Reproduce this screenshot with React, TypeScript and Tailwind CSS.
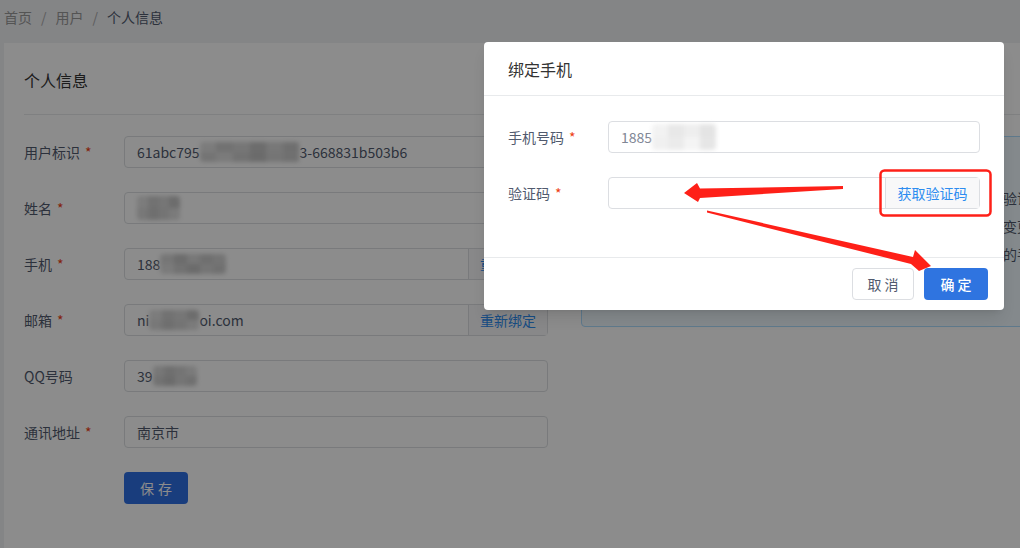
import React from "react";

const FONT = "font-['Microsoft_YaHei','Noto_Sans_CJK_SC','Noto_Sans',sans-serif]";

// blurred mosaic patch that hides private digits
const Mosaic = ({ tones, w, h = 20 }: { tones: string[]; w: number; h?: number }) => (
  <span
    className="inline-flex flex-wrap align-middle blur-[2px] overflow-hidden rounded"
    style={{ width: w, height: h }}
  >
    {tones.map((c, i) => (
      <span key={i} style={{ background: c, width: w / (tones.length / 2), height: h / 2 }} />
    ))}
  </span>
);

const dark = ["#e2e2e2", "#cfcfcf", "#d8d8d8", "#c6c6c6", "#dadada", "#cbcbcb", "#d4d4d4", "#e0e0e0", "#d0d0d0", "#c4c4c4", "#d6d6d6", "#cdcdcd"];
const light = ["#f2f2f2", "#e8e8e8", "#eeeeee", "#e4e4e4", "#f0f0f0", "#ebebeb", "#f4f4f4", "#e6e6e6"];

const Star = () => <span className="ml-[5px] text-[#ed4014]">*</span>;

const Row = ({
  label,
  required,
  children,
  addon,
}: {
  label: string;
  required?: boolean;
  children?: React.ReactNode;
  addon?: string;
}) => (
  <div className="flex items-center h-8 mb-6">
    <div className="w-[100px] text-sm text-[#515a6e]">
      {label}
      {required && <Star />}
    </div>
    <div className="flex w-[424px] h-8 border border-[#dcdee2] rounded">
      <div className="flex-1 flex items-center px-3 text-sm text-[#515a6e] whitespace-nowrap overflow-hidden">
        {children}
      </div>
      {addon && (
        <div className="w-[79px] flex items-center justify-center bg-[#f8f8f9] border-l border-[#dcdee2] text-sm text-[#2d8cf0]">
          {addon}
        </div>
      )}
    </div>
  </div>
);

export default function App() {
  return (
    <div className={`relative w-[1020px] h-[548px] overflow-hidden bg-[#f0f2f5] ${FONT}`}>
      {/* breadcrumb */}
      <div className="h-[43px] pl-1 pt-[7px] flex items-start text-sm leading-5 text-[#999]">
        <span>首页</span>
        <span className="mx-[9px] text-[#aaa]">/</span>
        <span>用户</span>
        <span className="mx-[9px] text-[#aaa]">/</span>
        <span className="text-[#515a6e]">个人信息</span>
      </div>

      {/* card */}
      <div className="ml-1 h-[505px] bg-white pl-5">
        <div className="h-[72px] pt-[2px] flex items-center text-base text-[#333] border-b border-[#e8eaec]">
          个人信息
        </div>
        <div className="flex pt-[21px]">
          <div className="w-[524px] shrink-0">
            <Row label="用户标识" required>
              61abc795
              <Mosaic tones={dark} w={100} />
              3-668831b503b6
            </Row>
            <Row label="姓名" required>
              <Mosaic tones={dark.slice(0, 8)} w={43} h={24} />
            </Row>
            <Row label="手机" required addon="重新绑定">
              188
              <Mosaic tones={dark.slice(2, 12)} w={66} />
            </Row>
            <Row label="邮箱" required addon="重新绑定">
              ni
              <Mosaic tones={dark.slice(0, 8)} w={50} />
              oi.com
            </Row>
            <Row label="QQ号码">
              39
              <Mosaic tones={dark.slice(4, 12)} w={44} />
            </Row>
            <Row label="通讯地址" required>
              南京市
            </Row>
            <div className="pl-[100px]">
              <button className="w-16 h-8 rounded bg-[#2f70e3] text-sm text-white tracking-[4px] pl-1">
                保存
              </button>
            </div>
          </div>
          <div className="ml-[33px] w-[520px] shrink-0 h-[191px] border border-[#abdcff] bg-[#f0faff] rounded pl-[15px] pt-[47px] text-sm leading-7 text-[#515a6e] whitespace-nowrap overflow-hidden">
            <p>温馨提示：为保障您的账号安全，绑定手机或邮箱时需要通过短信验证码验证。</p>
            <p>绑定成功后，系统将以新的手机号码作为登录账号，如需再次进行变更，请点击重新绑定。</p>
            <p>请确保填写的信息真实有效，验证码将发送至您当前填写的新绑定的手机号码上。</p>
          </div>
        </div>
      </div>

      {/* mask */}
      <div className="absolute inset-0 bg-black/45" />

      {/* modal */}
      <div className="absolute left-[484px] top-[42px] w-[520px] bg-white rounded-[4px] shadow-lg">
        <div className="h-[54px] px-6 flex items-center text-base text-[#333] border-b border-[#e8eaec]">
          绑定手机
        </div>
        <div className="px-6 pt-[25px] pb-12">
          <div className="flex items-center h-8 mb-6">
            <div className="w-[100px] text-sm text-[#515a6e]">
              手机号码
              <Star />
            </div>
            <div className="w-[372px] h-8 border border-[#dcdee2] rounded flex items-center px-3 text-sm text-[#808695]">
              1885
              <Mosaic tones={light} w={64} h={26} />
            </div>
          </div>
          <div className="flex items-center h-8">
            <div className="w-[100px] text-sm text-[#515a6e]">
              验证码
              <Star />
            </div>
            <div className="w-[372px] h-8 border border-[#dcdee2] rounded flex">
              <div className="flex-1" />
              <div className="w-[94px] flex items-center justify-center bg-[#f8f8f9] border-l border-[#dcdee2] text-sm text-[#2d8cf0]">
                获取验证码
              </div>
            </div>
          </div>
        </div>
        <div className="h-[53px] border-t border-[#e8eaec] flex items-center justify-end gap-[10px] pr-4">
          <button className="w-[62px] h-8 rounded border border-[#dcdee2] bg-white text-sm text-[#515a6e]">
            取 消
          </button>
          <button className="w-16 h-8 rounded bg-[#2f74e0] text-sm font-medium text-white">
            确 定
          </button>
        </div>
      </div>

      {/* red annotations */}
      <svg className="absolute inset-0 pointer-events-none" width="1020" height="548">
        <rect x="880.5" y="170.5" width="110" height="45" rx="4" fill="none" stroke="#fe2018" strokeWidth="2.5" />
        <polygon
          fill="#fe2018"
          points="843,186 700,188.5 697,183 684,193 698,202 700,198 843,189"
        />
        <polygon
          fill="#fe2018"
          points="707,210.5 913,257 915,250 931,266 919,271 911,264 707,212.5"
        />
      </svg>
    </div>
  );
}
